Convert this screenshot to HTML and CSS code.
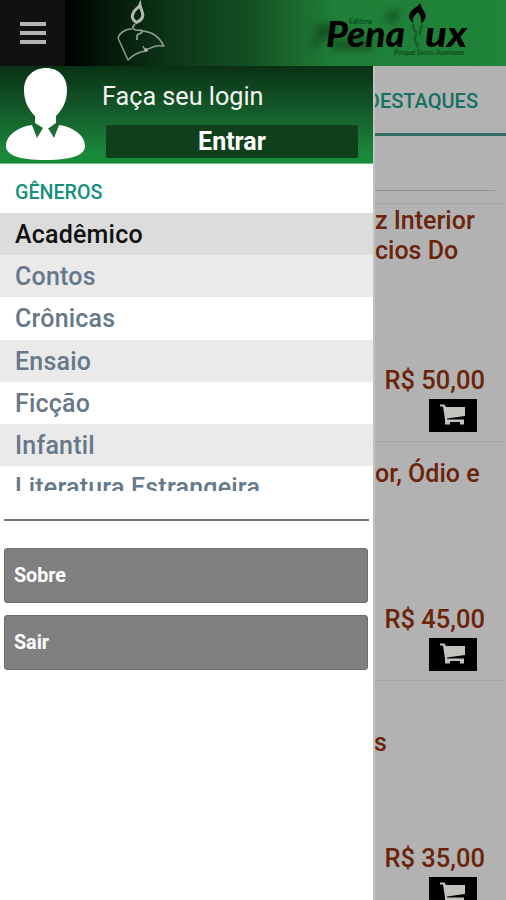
FILE: index.html
```html
<!DOCTYPE html>
<html lang="pt-BR">
<head>
    <meta charset="UTF-8">
    <title>Penalux</title>
    <link rel="stylesheet" href="styles.css">
</head>
<body>
<svg class="defs" width="0" height="0">
    <symbol id="cart" viewBox="0 0 48 33">
        <path d="M11 5.500h4.500l1.500 2.500h19v9l-18 2.500v1h17v5h-4v-2.500h-10v2.500h-5v-5l-2-13h-3z" fill="#c2c2bf"/>
    </symbol>
</svg>
<header class="topbar">
    <button class="menu-btn"><span></span><span></span><span></span></button>
    <svg class="book" width="55" height="66" viewBox="0 0 55 66">
        <path d="M30 5c1 6 4 8 2.500 12-1 3-3 4-6 5.500-5-3-5-7-2.500-11 2-3 5-4 6-6.500z" fill="none" stroke="#b4bab3" stroke-width="3"/>
        <g fill="none" stroke="#8e9d90" stroke-width="1.500" stroke-linejoin="round">
            <path d="M25 24c-3 3-3 5 1 6s7-1 6 2-5 1-5 4v4" stroke-width="1.800"/>
            <path d="M22 29c-6 0-12 3-14 9l10 22c5-5 11-8 17-9 6-4 12-6 19-5-4-8-11-14-21-15"/>
            <path d="M33 31l-2 2M35 50l-2-4"/>
        </g>
        <circle cx="36" cy="50" r="2" fill="#a3aea4"/>
    </svg>
    <svg class="logo" width="170" height="66" viewBox="0 0 170 66">
        <g class="logo-shadow">
            <path d="M-6 48l6-24h14q8 8-4 13h-8l-2 11zM14 40h40v10h-40zM66 22c0-8 10-12 14-14v14z"/>
        </g>
        <text class="logo-small" x="23" y="24" textLength="23">Editora</text>
        <text class="logo-name" x="0" y="47" textLength="79" lengthAdjust="spacingAndGlyphs">Pena</text>
        <text class="logo-name" x="99" y="47" textLength="42" lengthAdjust="spacingAndGlyphs">ux</text>
        <path d="M94 4c0 5 5 8 5 12 0 2-1 4-3 6 0-4-1-8-4-11-3 3-7 6-6 10-4-4-2-8 1-11 3-2 6-3 7-6z" stroke="#000" stroke-width="1.500"/>
        <path d="M88 24c-3 4 1 5 2 9s-3 4-1 8 4 3 2 7M97 25c-4 3-1 7-4 10" fill="none" stroke="#17602d" stroke-width="2.500"/>
        <text class="logo-small" x="68" y="55" textLength="70">Porque livros iluminam</text>
    </svg>
</header>
<div class="page">
    <aside class="drawer">
        <section class="login">
            <svg class="avatar" width="91" height="97" viewBox="0 0 91 97">
                <path d="M46 2c13 0 21 9 21 22 0 12-5 20-11 26v7l-7 5h-6l-8-5v-7c-6-6-11-14-11-26C24 11 33 2 46 2z" fill="#fff"/>
                <path d="M32 59l5 13 6-10h5l6 10 5-13c15 2 26 11 26 21 0 9-13 14-39.500 14S6 89 6 80c0-10 11-19 26-21z" fill="#fff"/>
            </svg>
            <div class="login-box">
                <p>Faça seu login</p>
                <button class="enter">Entrar</button>
            </div>
        </section>
        <h2>GÊNEROS</h2>
        <ul class="genres">
            <li class="active">Acadêmico</li>
            <li>Contos</li>
            <li>Crônicas</li>
            <li>Ensaio</li>
            <li>Ficção</li>
            <li>Infantil</li>
            <li>Literatura Estrangeira</li>
        </ul>
        <hr>
        <nav class="links">
            <a>Sobre</a>
            <a>Sair</a>
        </nav>
    </aside>
    <main class="catalog">
        <div class="tab"><span>DESTAQUES</span></div>
        <div class="search"></div>
        <article class="book-item first">
            <h3>z Interior<br>cios Do</h3>
            <div class="buy">
                <p>R$ 50,00</p>
                <svg class="cart" width="48" height="33"><use href="#cart"/></svg>
            </div>
        </article>
        <article class="book-item second">
            <h3>or, Ódio e</h3>
            <div class="buy">
                <p>R$ 45,00</p>
                <svg class="cart" width="48" height="33"><use href="#cart"/></svg>
            </div>
        </article>
        <article class="book-item third">
            <h3>s</h3>
            <div class="buy">
                <p>R$ 35,00</p>
                <svg class="cart" width="48" height="33"><use href="#cart"/></svg>
            </div>
        </article>
    </main>
</div>
</body>
</html>
```
FILE: styles.css
```css
* {
    margin: 0;
    padding: 0;
    box-sizing: border-box;
}

body {
    height: 900px;
    overflow: hidden;
    font-family: Roboto, "Liberation Sans", sans-serif;
    background: #fff;
}

.defs {
    display: none;
}

button {
    border: 0;
    font-family: inherit;
}

.topbar {
    height: 66px;
    display: flex;
    background: linear-gradient(90deg, #000 65px, #041a0a 110px, #0c3517 170px, #145023 250px, #1f7f38 335px, #20843a 100%);
}

.menu-btn {
    width: 65px;
    height: 66px;
    padding: 0 19px 1px 20px;
    background: #111;
    display: flex;
    flex-direction: column;
    justify-content: center;
    gap: 5px;
}

.menu-btn span {
    height: 4px;
    background: #b4b4b4;
}

.book {
    margin-left: 45px;
}

.logo {
    margin-left: 161px;
    overflow: visible;
}

.logo-name {
    font: italic 900 36px Lato, sans-serif;
}

.logo-shadow {
    opacity: 0.35;
    filter: blur(4px);
    transform: translate(-8px, 0);
}

.logo-small {
    font: italic 700 7px Lato, sans-serif;
    fill: #0d4a20;
}

.page {
    height: 834px;
    display: flex;
}

.drawer {
    width: 373px;
    flex: none;
    background: #fff;
}

.login {
    height: 98px;
    display: flex;
    background: linear-gradient(#0a3014, #14592a 45%, #1b8238 85%, #158f3a);
    border-bottom: 1px solid #6fb985;
}

.login-box {
    flex: 1;
    padding: 13px 15px 0 11px;
}

.login-box p {
    height: 46px;
    line-height: 35px;
    font-size: 25.2px;
    color: #f2f5f1;
}

.enter {
    display: block;
    width: 252px;
    height: 33px;
    margin-left: 4px;
    border-radius: 2px;
    background: #103f1c;
    color: #fff;
    font-size: 25px;
    font-weight: 700;
    line-height: 30px;
}

.drawer h2 {
    height: 49px;
    padding-left: 15px;
    line-height: 57px;
    font-size: 19.7px;
    font-weight: 500;
    color: #168f7d;
}

.genres {
    height: 278px;
    overflow: hidden;
    list-style: none;
}

.genres li {
    height: 42.2px;
    padding-left: 15px;
    line-height: 43px;
    font-size: 25px;
    font-weight: 500;
    letter-spacing: 0.2px;
    color: #66788a;
}

.genres li:nth-child(even) {
    background: #eaeaea;
}

.genres li.active {
    background: #dcdcdc;
    color: #111;
}

.drawer hr {
    height: 2px;
    margin: 28px 4px 0;
    border: 0;
    background: #707070;
}

.links {
    display: flex;
    flex-direction: column;
    gap: 12px;
    padding: 27px 5px 0 4px;
}

.links a {
    height: 55px;
    padding-left: 9px;
    border: 1px solid #6d6d6d;
    border-radius: 3px;
    background: #808080;
    color: #fff;
    font-size: 19.7px;
    font-weight: 700;
    line-height: 53px;
}

.catalog {
    flex: 1;
    overflow: hidden;
    background: #b2b2b2;
    border-left: 2px solid #c2c2c2;
    white-space: nowrap;
}

.tab {
    height: 70px;
    padding-right: 28px;
    display: flex;
    justify-content: flex-end;
    border-bottom: 3px solid #346e65;
    line-height: 70px;
    font-size: 20px;
    font-weight: 500;
    color: #14705f;
}

.search {
    height: 55px;
    margin-right: 11px;
    border-bottom: 1px solid #929292;
}

.book-item {
    height: 239px;
    margin-right: 2px;
    border-top: 1px solid #a6a6a6;
    display: flex;
    flex-direction: column;
    justify-content: space-between;
    color: #6b230a;
}

.book-item h3 {
    padding-top: 2px;
    font-size: 25px;
    font-weight: 500;
    line-height: 30px;
}

.book-item p {
    font-size: 25.5px;
    font-weight: 500;
    line-height: 30px;
}

.buy {
    display: flex;
    flex-direction: column;
    align-items: flex-end;
    padding: 0 19px 9px 0;
}

.cart {
    margin: 4px 8px 0 0;
    background: #000;
}

.first {
    height: 238px;
    margin-top: 12px;
}

.second h3 {
    padding-top: 17px;
}

.third h3 {
    margin-left: -1px;
    padding-top: 47px;
}
```
